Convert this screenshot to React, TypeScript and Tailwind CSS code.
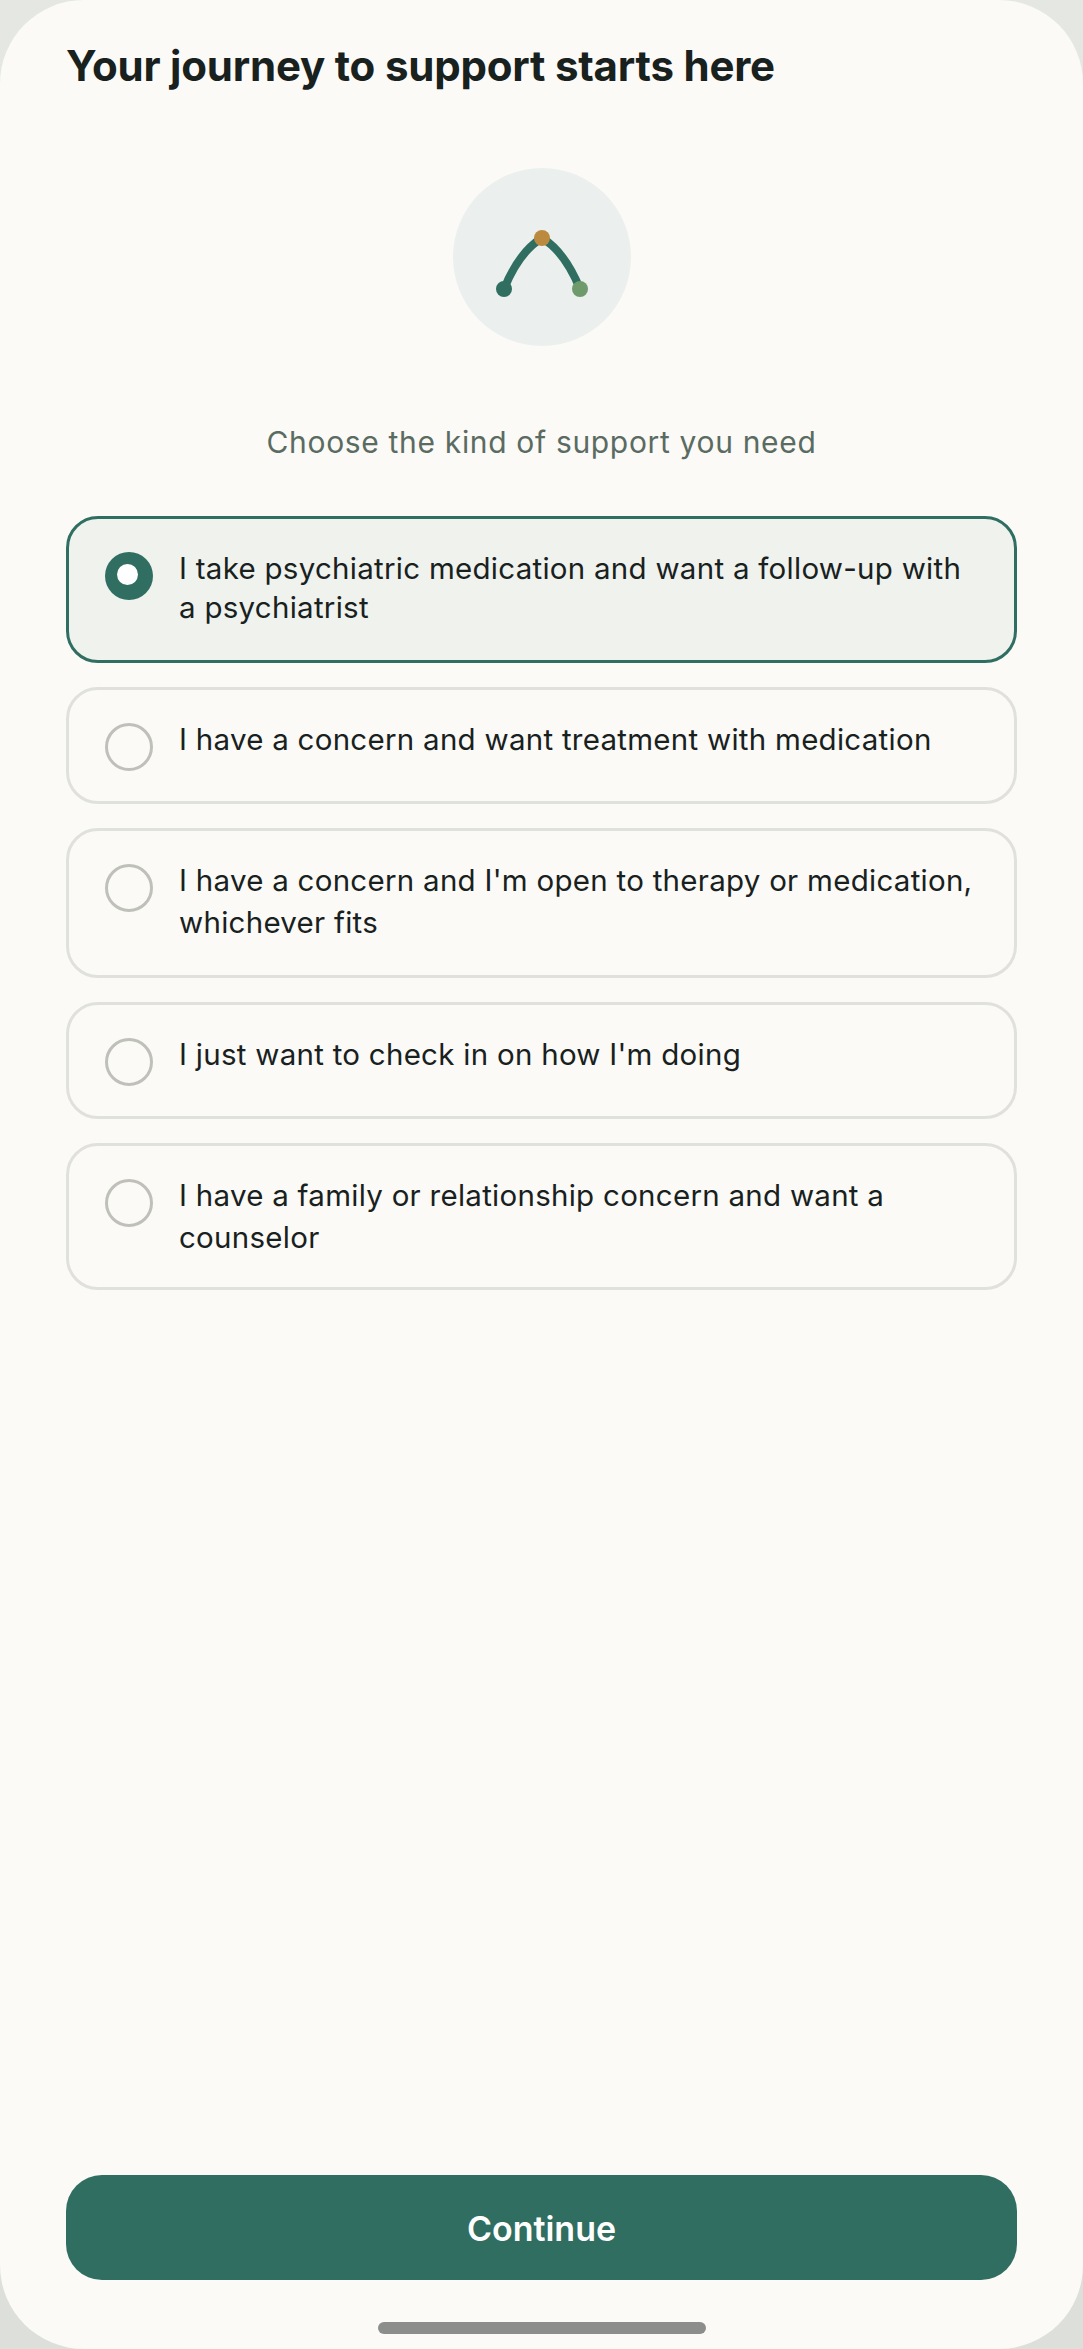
type OptionItem = { label: string; selected?: boolean; text: string; pad: string };

// two-line rows use a looser leading except the first one
const options: OptionItem[] = [
  {
    label: "I take psychiatric medication and want a follow-up with a psychiatrist",
    selected: true,
    text: "-mt-[3px] leading-[39px]",
    pad: "pb-[33px]",
  },
  { label: "I have a concern and want treatment with medication", text: "-mt-[3px] leading-[39px]", pad: "pb-[30px]" },
  {
    label: "I have a concern and I'm open to therapy or medication, whichever fits",
    text: "-mt-[5px] leading-[42px]",
    pad: "pb-[32px]",
  },
  { label: "I just want to check in on how I'm doing", text: "-mt-[3px] leading-[39px]", pad: "pb-[30px]" },
  {
    label: "I have a family or relationship concern and want a counselor",
    text: "-mt-[5px] leading-[42px]",
    pad: "pb-[29px]",
  },
];

const Logo = () => (
  <div className="mx-auto mt-[76px] flex h-[178px] w-[178px] items-center justify-center rounded-full bg-[#ebf0ee]">
    <svg width="178" height="178" viewBox="0 0 178 178" fill="none">
      <path d="M51 121C62 94 74 79 89 70C104 79 116 94 127 121" stroke="#2f6e61" strokeWidth="8" strokeLinecap="round" />
      <circle cx="51" cy="121" r="8" fill="#2f6e61" />
      <circle cx="89" cy="70" r="8" fill="#bc8a3e" />
      <circle cx="127" cy="121" r="8" fill="#6f9b6c" />
    </svg>
  </div>
);

const Option = ({ label, selected, text, pad }: OptionItem) => (
  <div
    className={`flex gap-[26px] rounded-[32px] border-[3px] px-[36px] pt-[33px] ${pad} ${
      selected ? "border-[#2f6e61] bg-[#eff2ed]" : "border-[#e0e1dd]"
    }`}
  >
    {selected ? (
      <span className="flex h-[48px] w-[48px] shrink-0 items-center justify-center rounded-full bg-[#2f6e61]">
        <span className="mr-[3px] mb-[3px] h-[21px] w-[21px] rounded-full bg-white" />
      </span>
    ) : (
      <span className="h-[48px] w-[48px] shrink-0 rounded-full border-[3px] border-[#c0c0bb]" />
    )}
    <span className={`text-[29.5px] tracking-[0.27px] text-[#18211e] ${text}`}>{label}</span>
  </div>
);

export default function App() {
  return (
    <div className="h-[2349px] w-[1083px] bg-gradient-to-b from-[#e5e7e3] to-[#dcdfda] font-['Inter',sans-serif]">
      <div className="flex h-full flex-col rounded-[84px] bg-[#fbfaf6] px-[66px]">
        <h1 className="mt-[40px] text-[42px] leading-[52px] font-bold tracking-[-0.2px] text-[#18211e]">
          Your journey to support starts here
        </h1>
        <Logo />
        <p className="mt-[76px] text-center text-[30px] leading-[40px] tracking-[0.67px] text-[#5a6b62]">
          Choose the kind of support you need
        </p>
        <div className="mt-[54px] flex flex-col gap-[24px]">
          {options.map((o) => (
            <Option key={o.label} {...o} />
          ))}
        </div>
        <button className="mt-auto h-[105px] w-full rounded-[36px] bg-[#2f6e61] pt-[2px] text-[34px] font-semibold text-white">
          Continue
        </button>
        <div className="mx-auto mt-[42px] mb-[15px] h-[12px] w-[328px] rounded-full bg-[#8b8e8a]" />
      </div>
    </div>
  );
}
